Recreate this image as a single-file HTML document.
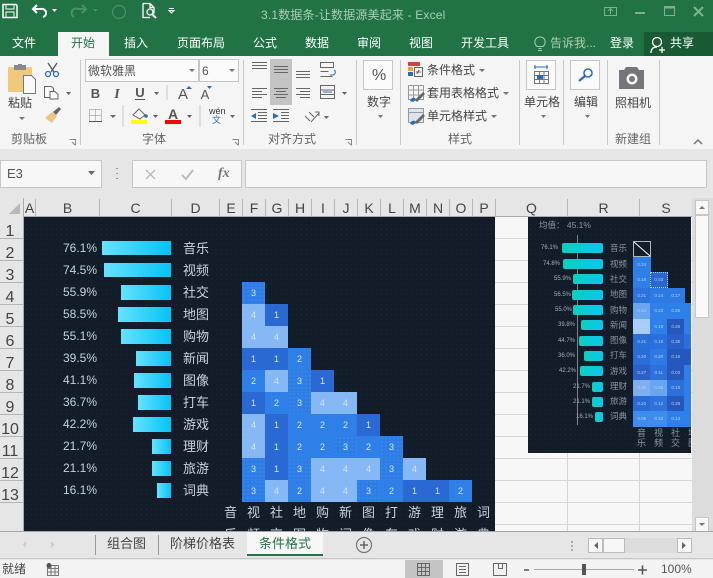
<!DOCTYPE html>
<html lang="zh"><head><meta charset="utf-8"><title>Excel</title>
<style>
*{box-sizing:border-box}
html,body{margin:0;padding:0;width:713px;height:578px;overflow:hidden;background:#e6e6e6;font-family:"Liberation Sans","Noto Sans CJK SC",sans-serif}
#p{position:relative;width:713px;height:578px;overflow:hidden}
.a,.t,.c,.b,.l,.m,.n,.h,.hr,.p,.q,.r,.d,.e{position:absolute}
.t{white-space:nowrap;line-height:1;font-size:12px;color:#444}
.tab{color:#fff;top:37px;font-size:12px}
.g{top:133px;color:#666;font-size:12px}
.h{top:199px;height:18px;text-align:center;font-size:14px;line-height:19px;color:#444;border-right:1px solid #b5b5b5}
.hr{left:0;width:23px;height:22px;text-align:center;font-size:16px;line-height:29px;color:#444;border-bottom:1px solid #b5b5b5;padding-right:3px;overflow:visible}
.c{width:23px;height:22px;color:#d5e4f5;font-size:9px;line-height:22px;text-align:center}
.k1{background:#2a68d4}.k2{background:#2f7fe8}.k3{background-color:#2e7ce6;background-image:radial-gradient(circle,#45a8f2 .5px,transparent .7px);background-size:4px 4px}.k4{background:#86b8f5}
.b{left:0;height:15px;background:linear-gradient(90deg,#66e2ff,#05c3f5)}
.p{width:60px;text-align:right;font-size:12px;line-height:14px;color:#c5d2df;white-space:nowrap}
.l{left:183px;font-size:13px;line-height:14px;color:#c9d4df;white-space:nowrap}
.n{width:23px;text-align:center;font-size:13px;line-height:14px;color:#c9d4df}
.q{width:40px;text-align:right;color:#a5b0bc;font-size:6px;line-height:8px;white-space:nowrap}
.r{height:10px;border-radius:2px;background:linear-gradient(90deg,#0ccfbe,#0bc6ef)}
.m{left:82px;color:#8b96a3;font-size:8.5px;line-height:11px;white-space:nowrap}
.d{width:17.5px;height:15.5px;color:#b9d1ee;font-size:4.5px;line-height:15px;text-align:center}
.e{width:17px;color:#8b96a3;font-size:9px;line-height:10px;text-align:center}
.s{position:absolute;top:60px;width:1px;height:85px;background:#c8c8c8}
</style></head><body><div id="p">

<!-- title bar & tabs -->
<div class="a" style="left:0;top:0;width:713px;height:56px;background:#217346"></div>
<div class="a" style="left:58px;top:32px;width:51px;height:24px;background:#f5f5f5"></div>
<div class="a" style="left:644px;top:32px;width:69px;height:24px;background:#195a35"></div>
<div class="t" style="left:261px;top:9px;color:#a9cdb8;font-size:12px;letter-spacing:.17px">3.1数据条-让数据源美起来 - Excel</div>
<div class="t tab" style="left:12px">文件</div>
<div class="t tab" style="left:71px;color:#217346">开始</div>
<div class="t tab" style="left:124px">插入</div>
<div class="t tab" style="left:177px">页面布局</div>
<div class="t tab" style="left:253px">公式</div>
<div class="t tab" style="left:305px">数据</div>
<div class="t tab" style="left:357px">审阅</div>
<div class="t tab" style="left:409px">视图</div>
<div class="t tab" style="left:461px">开发工具</div>
<div class="t tab" style="left:550px;color:#a9cdb8">告诉我...</div>
<div class="t tab" style="left:610px">登录</div>
<div class="t tab" style="left:670px">共享</div>

<!-- ribbon -->
<div class="a" style="left:0;top:56px;width:713px;height:93px;background:#f5f5f5"></div>
<div class="s" style="left:80px"></div><div class="s" style="left:243px"></div><div class="s" style="left:356px"></div><div class="s" style="left:400px"></div><div class="s" style="left:519px"></div><div class="s" style="left:563px"></div><div class="s" style="left:607px"></div><div class="s" style="left:659px"></div>
<div class="a" style="left:85px;top:59px;width:114px;height:23px;background:#fafafa;border:1px solid #c6c6c6"></div>
<div class="a" style="left:199px;top:59px;width:40px;height:23px;background:#fafafa;border:1px solid #c6c6c6"></div>
<div class="a" style="left:270px;top:59px;width:22px;height:46px;background:#c4c4c4"></div>
<div class="a" style="left:363px;top:60px;width:30px;height:30px;background:#fafafa;border:1px solid #c6c6c6"></div>
<div class="a" style="left:526px;top:60px;width:30px;height:30px;background:#fafafa;border:1px solid #c6c6c6"></div>
<div class="a" style="left:570px;top:60px;width:30px;height:30px;background:#fafafa;border:1px solid #c6c6c6"></div>
<div class="t" style="left:88px;top:65px;font-size:12px;color:#555">微软雅黑</div>
<div class="t" style="left:202px;top:65px;font-size:12px;color:#555">6</div>
<div class="t" style="left:8px;top:97px;color:#444">粘贴</div>
<div class="t g" style="left:11px">剪贴板</div>
<div class="t g" style="left:142px">字体</div>
<div class="t g" style="left:268px">对齐方式</div>
<div class="t g" style="left:448px">样式</div>
<div class="t g" style="left:615px">新建组</div>
<div class="t" style="left:367px;top:96px">数字</div>
<div class="t" style="left:524px;top:96px">单元格</div>
<div class="t" style="left:574px;top:96px">编辑</div>
<div class="t" style="left:615px;top:97px">照相机</div>
<div class="t" style="left:427px;top:64px">条件格式</div>
<div class="t" style="left:427px;top:87px">套用表格格式</div>
<div class="t" style="left:427px;top:110px">单元格样式</div>
<div class="t" style="left:372px;top:68px;font-size:16px;color:#555">%</div>
<div class="t" style="left:209px;top:107px;font-size:9px;color:#333">wén</div>
<div class="t" style="left:212px;top:116px;font-size:9px;color:#2a6cb8">文</div>

<!-- formula bar -->
<div class="a" style="left:0;top:149px;width:713px;height:49px;background:#e6e6e6"></div>
<div class="a" style="left:0;top:160px;width:102px;height:28px;background:#f7f7f7;border:1px solid #c6c6c6"></div>
<div class="a" style="left:132px;top:160px;width:110px;height:28px;background:#f7f7f7;border:1px solid #c6c6c6"></div>
<div class="a" style="left:245px;top:160px;width:462px;height:28px;background:#f7f7f7;border:1px solid #c6c6c6"></div>
<div class="t" style="left:7px;top:167px;font-size:13px;color:#555">E3</div>
<div class="t" style="left:218px;top:166px;font:italic bold 14px 'Liberation Serif',serif;color:#777">fx</div>

<!-- sheet grid -->
<div class="a" style="left:0;top:198px;width:692px;height:333px;background:#f7f7f7"></div>
<div class="a" style="left:495px;top:217px;width:197px;height:314px;background:repeating-linear-gradient(180deg,#f7f7f7 0,#f7f7f7 21px,#d6d6d6 21px,#d6d6d6 22px)"></div>
<div class="a" style="left:567px;top:217px;width:1px;height:314px;background:#d6d6d6"></div>
<div class="a" style="left:639px;top:217px;width:1px;height:314px;background:#d6d6d6"></div>
<div class="a" style="left:0;top:198px;width:692px;height:19px;background:#e6e6e6;border-bottom:1px solid #aaa"></div>
<div class="a" style="left:0;top:198px;width:24px;height:333px;background:#e6e6e6;border-right:1px solid #aaa"></div>

<div class="h" style="left:24px;width:12px">A</div><div class="h" style="left:36px;width:64px">B</div><div class="h" style="left:100px;width:72px">C</div><div class="h" style="left:172px;width:48px">D</div><div class="h" style="left:220px;width:23px">E</div><div class="h" style="left:243px;width:23px">F</div><div class="h" style="left:266px;width:23px">G</div><div class="h" style="left:289px;width:23px">H</div><div class="h" style="left:312px;width:23px">I</div><div class="h" style="left:335px;width:23px">J</div><div class="h" style="left:358px;width:23px">K</div><div class="h" style="left:381px;width:23px">L</div><div class="h" style="left:404px;width:23px">M</div><div class="h" style="left:427px;width:23px">N</div><div class="h" style="left:450px;width:23px">O</div><div class="h" style="left:473px;width:23px">P</div><div class="h" style="left:496px;width:72px">Q</div><div class="h" style="left:568px;width:72px">R</div><div class="h" style="left:640px;width:52px;border:0">S</div>

<div class="hr" style="top:217px">1</div><div class="hr" style="top:239px">2</div><div class="hr" style="top:261px">3</div><div class="hr" style="top:283px">4</div><div class="hr" style="top:305px">5</div><div class="hr" style="top:327px">6</div><div class="hr" style="top:349px">7</div><div class="hr" style="top:371px">8</div><div class="hr" style="top:393px">9</div><div class="hr" style="top:415px">10</div><div class="hr" style="top:437px">11</div><div class="hr" style="top:459px">12</div><div class="hr" style="top:481px">13</div>

<!-- main dark chart -->
<div class="a" style="left:24px;top:217px;width:471px;height:314px;overflow:hidden;background-color:#131c29;background-image:radial-gradient(circle,#1b2835 .6px,transparent .8px);background-size:5px 5px">
  <div class="p" style="left:13px;top:24px">76.1%</div><div class="p" style="left:13px;top:46px">74.5%</div><div class="p" style="left:13px;top:68px">55.9%</div><div class="p" style="left:13px;top:90px">58.5%</div><div class="p" style="left:13px;top:112px">55.1%</div><div class="p" style="left:13px;top:134px">39.5%</div><div class="p" style="left:13px;top:156px">41.1%</div><div class="p" style="left:13px;top:178px">36.7%</div><div class="p" style="left:13px;top:200px">42.2%</div><div class="p" style="left:13px;top:222px">21.7%</div><div class="p" style="left:13px;top:244px">21.1%</div><div class="p" style="left:13px;top:266px">16.1%</div>

  <div class="b" style="left:78px;width:69px;top:24px;height:14px"></div><div class="b" style="left:80px;width:67px;top:46px;height:14px"></div><div class="b" style="left:97px;width:50px;top:68px"></div><div class="b" style="left:94px;width:53px;top:90px"></div><div class="b" style="left:97px;width:50px;top:112px"></div><div class="b" style="left:112px;width:35px;top:134px"></div><div class="b" style="left:110px;width:37px;top:156px"></div><div class="b" style="left:114px;width:33px;top:178px"></div><div class="b" style="left:109px;width:38px;top:200px"></div><div class="b" style="left:128px;width:19px;top:222px"></div><div class="b" style="left:128px;width:19px;top:244px"></div><div class="b" style="left:133px;width:14px;top:266px"></div>

  <div class="l" style="left:159px;top:25px">音乐</div><div class="l" style="left:159px;top:47px">视频</div><div class="l" style="left:159px;top:69px">社交</div><div class="l" style="left:159px;top:91px">地图</div><div class="l" style="left:159px;top:113px">购物</div><div class="l" style="left:159px;top:135px">新闻</div><div class="l" style="left:159px;top:157px">图像</div><div class="l" style="left:159px;top:179px">打车</div><div class="l" style="left:159px;top:201px">游戏</div><div class="l" style="left:159px;top:223px">理财</div><div class="l" style="left:159px;top:245px">旅游</div><div class="l" style="left:159px;top:267px">词典</div>

  <div class="c k3" style="left:218px;top:65px">3</div>
  <div class="c k4" style="left:218px;top:87px">4</div><div class="c k1" style="left:241px;top:87px">1</div>
  <div class="c k4" style="left:218px;top:109px">4</div><div class="c k4" style="left:241px;top:109px">4</div>
  <div class="c k1" style="left:218px;top:131px">1</div><div class="c k1" style="left:241px;top:131px">1</div><div class="c k2" style="left:264px;top:131px">2</div>
  <div class="c k2" style="left:218px;top:153px">2</div><div class="c k4" style="left:241px;top:153px">4</div><div class="c k3" style="left:264px;top:153px">3</div><div class="c k1" style="left:287px;top:153px">1</div>
  <div class="c k1" style="left:218px;top:175px">1</div><div class="c k2" style="left:241px;top:175px">2</div><div class="c k3" style="left:264px;top:175px">3</div><div class="c k4" style="left:287px;top:175px">4</div><div class="c k4" style="left:310px;top:175px">4</div>
  <div class="c k4" style="left:218px;top:197px">4</div><div class="c k1" style="left:241px;top:197px">1</div><div class="c k2" style="left:264px;top:197px">2</div><div class="c k2" style="left:287px;top:197px">2</div><div class="c k2" style="left:310px;top:197px">2</div><div class="c k1" style="left:333px;top:197px">1</div>
  <div class="c k4" style="left:218px;top:219px">4</div><div class="c k1" style="left:241px;top:219px">1</div><div class="c k2" style="left:264px;top:219px">2</div><div class="c k2" style="left:287px;top:219px">2</div><div class="c k3" style="left:310px;top:219px">3</div><div class="c k2" style="left:333px;top:219px">2</div><div class="c k3" style="left:356px;top:219px">3</div>
  <div class="c k3" style="left:218px;top:241px">3</div><div class="c k1" style="left:241px;top:241px">1</div><div class="c k3" style="left:264px;top:241px">3</div><div class="c k4" style="left:287px;top:241px">4</div><div class="c k4" style="left:310px;top:241px">4</div><div class="c k4" style="left:333px;top:241px">4</div><div class="c k3" style="left:356px;top:241px">3</div><div class="c k4" style="left:379px;top:241px">4</div>
  <div class="c k3" style="left:218px;top:263px">3</div><div class="c k4" style="left:241px;top:263px">4</div><div class="c k2" style="left:264px;top:263px">2</div><div class="c k4" style="left:287px;top:263px">4</div><div class="c k4" style="left:310px;top:263px">4</div><div class="c k3" style="left:333px;top:263px">3</div><div class="c k2" style="left:356px;top:263px">2</div><div class="c k1" style="left:379px;top:263px">1</div><div class="c k1" style="left:402px;top:263px">1</div><div class="c k2" style="left:425px;top:263px">2</div>

  <div class="n" style="left:195px;top:289px">音</div><div class="n" style="left:218px;top:289px">视</div><div class="n" style="left:241px;top:289px">社</div><div class="n" style="left:264px;top:289px">地</div><div class="n" style="left:287px;top:289px">购</div><div class="n" style="left:310px;top:289px">新</div><div class="n" style="left:333px;top:289px">图</div><div class="n" style="left:356px;top:289px">打</div><div class="n" style="left:379px;top:289px">游</div><div class="n" style="left:402px;top:289px">理</div><div class="n" style="left:425px;top:289px">旅</div><div class="n" style="left:448px;top:289px">词</div>
  <div class="n" style="left:195px;top:311px">乐</div><div class="n" style="left:218px;top:311px">频</div><div class="n" style="left:241px;top:311px">交</div><div class="n" style="left:264px;top:311px">图</div><div class="n" style="left:287px;top:311px">物</div><div class="n" style="left:310px;top:311px">闻</div><div class="n" style="left:333px;top:311px">像</div><div class="n" style="left:356px;top:311px">车</div><div class="n" style="left:379px;top:311px">戏</div><div class="n" style="left:402px;top:311px">财</div><div class="n" style="left:425px;top:311px">游</div><div class="n" style="left:448px;top:311px">典</div>
</div>

<!-- small chart -->
<div class="a" style="left:528px;top:217px;width:163px;height:236px;overflow:hidden;background-color:#131c29;background-image:radial-gradient(circle,#1b2835 .5px,transparent .7px);background-size:5px 5px">
  <div class="t" style="left:11px;top:4px;font-size:8.5px;color:#8b96a3">均值： 45.1%</div>
  <div class="a" style="left:49px;top:18px;width:1px;height:190px;background:#7b8590"></div>
  <div class="r" style="left:34px;width:41px;top:26px"></div><div class="r" style="left:35px;width:40px;top:42px"></div><div class="r" style="left:45px;width:30px;top:57px"></div><div class="r" style="left:44px;width:31px;top:73px"></div><div class="r" style="left:45px;width:30px;top:88px"></div><div class="r" style="left:53px;width:22px;top:103px"></div><div class="r" style="left:51px;width:24px;top:119px"></div><div class="r" style="left:56px;width:19px;top:134px"></div><div class="r" style="left:52px;width:23px;top:149px"></div><div class="r" style="left:64px;width:11px;top:165px"></div><div class="r" style="left:64px;width:11px;top:180px"></div><div class="r" style="left:67px;width:8px;top:195px"></div>
  <div class="q" style="left:-10px;top:27px">76.1%</div><div class="q" style="left:-8px;top:43px">74.8%</div><div class="q" style="left:3px;top:58px">55.9%</div><div class="q" style="left:3px;top:74px">56.5%</div><div class="q" style="left:4px;top:89px">55.0%</div><div class="q" style="left:7px;top:104px">39.8%</div><div class="q" style="left:7px;top:120px">44.7%</div><div class="q" style="left:7px;top:135px">36.0%</div><div class="q" style="left:8px;top:150px">42.2%</div><div class="q" style="left:22px;top:166px">21.7%</div><div class="q" style="left:22px;top:181px">21.1%</div><div class="q" style="left:25px;top:196px">16.1%</div>
  <div class="m" style="top:26px">音乐</div><div class="m" style="top:42px">视频</div><div class="m" style="top:57px">社交</div><div class="m" style="top:72px">地图</div><div class="m" style="top:88px">购物</div><div class="m" style="top:103px">新闻</div><div class="m" style="top:118px">图像</div><div class="m" style="top:133px">打车</div><div class="m" style="top:149px">游戏</div><div class="m" style="top:164px">理财</div><div class="m" style="top:179px">旅游</div><div class="m" style="top:194px">词典</div>
  <svg class="a" style="left:105px;top:24px" width="18" height="16"><rect x=".5" y=".5" width="17" height="15" fill="none" stroke="#aeb8c2"/><path d="M1 1 17 15" stroke="#fff"/></svg>

  <div class="d" style="left:105px;top:40px;background:#2f7fe8">0.24</div>
  <div class="d" style="left:105px;top:55px;background:#2f7fe8">0.16</div>
  <div class="d" style="left:105px;top:71px;background:#2d72dd">0.21</div>
  <div class="d" style="left:105px;top:86px;background:#6aa5f0">0.41</div>
  <div class="d" style="left:105px;top:102px;background:#a8cdf8">0.31</div>
  <div class="d" style="left:105px;top:117px;background:#2a6ed8">0.21</div>
  <div class="d" style="left:105px;top:132px;background:#2a6cd8">0.20</div>
  <div class="d" style="left:105px;top:148px;background:#2a60c8">0.27</div>
  <div class="d" style="left:105px;top:163px;background:#7eb0f0">0.39</div>
  <div class="d" style="left:105px;top:179px;background:#2a6ad8">0.22</div>
  <div class="d" style="left:105px;top:194px;background:#3f8cef">0.06</div>

  <div class="d" style="left:122px;top:55px;background:#2a66d0;outline:1px dotted #a8cdf8;outline-offset:-1px">0.03</div>
  <div class="d" style="left:122px;top:71px;background:#2e7ae4">0.14</div>
  <div class="d" style="left:122px;top:86px;background:#2f7fe8">0.23</div>
  <div class="d" style="left:122px;top:102px;background:#2f7fe8">0.18</div>
  <div class="d" style="left:122px;top:117px;background:#2a70dc">0.19</div>
  <div class="d" style="left:122px;top:132px;background:#2e7ae4">0.20</div>
  <div class="d" style="left:122px;top:148px;background:#2c70dc">0.11</div>
  <div class="d" style="left:122px;top:163px;background:#6aa5f0">0.06</div>
  <div class="d" style="left:122px;top:179px;background:#2d72dd">0.12</div>
  <div class="d" style="left:122px;top:194px;background:#3f8cef">0.10</div>

  <div class="d" style="left:139px;top:71px;background:#2e7ae4">0.17</div>
  <div class="d" style="left:139px;top:86px;background:#2f7fe8">0.25</div>
  <div class="d" style="left:139px;top:102px;background:#2558bd">0.26</div>
  <div class="d" style="left:139px;top:117px;background:#2a5fc8">0.35</div>
  <div class="d" style="left:139px;top:132px;background:#2558bd">0.16</div>
  <div class="d" style="left:139px;top:148px;background:#2558bd">0.03</div>
  <div class="d" style="left:139px;top:163px;background:#2c70dc">0.18</div>
  <div class="d" style="left:139px;top:179px;background:#2558bd">0.28</div>
  <div class="d" style="left:139px;top:194px;background:#2f7fe8">0.13</div>

  <div class="a" style="left:156px;top:86px;width:7px;height:31px;background:#2f7fe8"></div>
  <div class="a" style="left:156px;top:117px;width:7px;height:15px;background:#2a70dc"></div>
  <div class="a" style="left:156px;top:132px;width:7px;height:16px;background:#2558bd"></div>
  <div class="a" style="left:156px;top:148px;width:7px;height:62px;background:#2f7fe8"></div>

  <div class="e" style="left:105px;top:211px">音<br>乐</div><div class="e" style="left:122px;top:211px">视<br>频</div><div class="e" style="left:139px;top:211px">社<br>交</div><div class="e" style="left:156px;top:211px">地<br>图</div>
</div>

<!-- scrollbars -->
<div class="a" style="left:692px;top:198px;width:21px;height:333px;background:#dcdcdc"></div>
<div class="a" style="left:695px;top:200px;width:14px;height:15px;background:#f7f7f7;border:1px solid #c6c6c6"></div>
<div class="a" style="left:695px;top:215px;width:14px;height:103px;background:#f9f9f9;border:1px solid #c6c6c6"></div>
<div class="a" style="left:695px;top:517px;width:14px;height:15px;background:#f7f7f7;border:1px solid #c6c6c6"></div>
<div class="a" style="left:0;top:531px;width:713px;height:1px;background:#a5a5a5"></div>

<!-- sheet tabs -->
<div class="a" style="left:0;top:532px;width:713px;height:27px;background:#e6e6e6;border-bottom:1px solid #c6c6c6"></div>
<div class="a" style="left:95px;top:535px;width:1px;height:20px;background:#999"></div>
<div class="a" style="left:158px;top:535px;width:1px;height:20px;background:#999"></div>
<div class="a" style="left:247px;top:532px;width:76px;height:24px;background:#f7f7f7;border-bottom:2px solid #217346"></div>
<div class="t" style="left:107px;top:537px;font-size:13px;color:#444">组合图</div>
<div class="t" style="left:170px;top:537px;font-size:13px;color:#444">阶梯价格表</div>
<div class="t" style="left:259px;top:537px;font-size:13px;color:#217346">条件格式</div>
<div class="a" style="left:588px;top:538px;width:104px;height:15px;background:#dcdcdc"></div>
<div class="a" style="left:588px;top:538px;width:15px;height:15px;background:#f7f7f7;border:1px solid #bbb"></div>
<div class="a" style="left:603px;top:538px;width:22px;height:15px;background:#f7f7f7;border:1px solid #bbb"></div>
<div class="a" style="left:677px;top:538px;width:15px;height:15px;background:#f7f7f7;border:1px solid #bbb"></div>

<!-- status bar -->
<div class="a" style="left:0;top:560px;width:713px;height:18px;background:#f3f3f3"></div>
<div class="a" style="left:405px;top:560px;width:38px;height:18px;background:#c4c4c4"></div>
<div class="t" style="left:2px;top:563px;font-size:12px;color:#444">就绪</div>
<div class="t" style="left:661px;top:563px;font-size:12px;color:#555">100%</div>

<!-- icons overlay -->
<svg class="a" style="left:0;top:0" width="713" height="578" viewBox="0 0 713 578" fill="none">
 <!-- QAT -->
 <path d="M3 4.500h13l1 1v12H3z" stroke="#fff" stroke-width="1.500"/><path d="M6 5v4h8V5M6 17v-5h8v5" stroke="#fff"/>
 <path d="M37 5l-4 4 4 4M33 9h8a4 4 0 0 1 2 8" stroke="#fff" stroke-width="2"/>
 <path d="M52 9l5 0-2.500 3z" fill="#fff"/>
 <path d="M82 5l4 4-4 4M86 9h-8a4 4 0 0 0 -4 8" stroke="#4d9068" stroke-width="2"/>
 <path d="M93 9l5 0-2.500 3z" fill="#4d9068"/>
 <circle cx="119" cy="12" r="6.500" stroke="#4d9068" stroke-width="1.200"/>
 <path d="M143 3.500h7l4 4v6M143 3.500v14h7M150 3.500v4h4" stroke="#fff" stroke-width="1.300"/><circle cx="150" cy="12" r="3" stroke="#fff" stroke-width="1.300"/><path d="M152 14l4 4" stroke="#fff" stroke-width="2"/>
 <path d="M169 8.500h5M169 10.500h5l-2.500 2.500z" stroke="#fff"/>
 <!-- window -->
 <path d="M604.500 7.500h12v8h-12z" stroke="#7fb096"/><path d="M608 11l2.500-2.500L613 11M610.500 9v5" stroke="#7fb096"/>
 <path d="M635 13h10" stroke="#7fb096" stroke-width="2"/>
 <path d="M664.500 6.500h10v9h-10z" stroke="#7fb096"/><path d="M664 7.500h11" stroke="#7fb096" stroke-width="2"/>
 <path d="M694 7l9 9M703 7l-9 9" stroke="#7fb096" stroke-width="2"/>
 <path d="M538 50.500h4M538.500 48.500h3M537 46.500c-4-4-2-9.500 3-9.500s7 5.500 3 9.500z" stroke="#a9cdb8"/>
 <circle cx="657" cy="42" r="4.500" stroke="#fff" stroke-width="1.300"/><path d="M651 53c0-4 2-6 6-6M659 50h6M662 47v6" stroke="#fff" stroke-width="1.300"/>
 <!-- clipboard -->
 <rect x="8" y="67" width="24" height="25" rx="1" fill="#f0c97e"/><rect x="14" y="65" width="12" height="5" fill="#8a8a8a"/><rect x="18" y="64" width="4" height="3" fill="#8a8a8a"/>
 <path d="M23.500 75.500h8l4 4v14h-12z" fill="#fafafa" stroke="#777"/>
 <path d="M19 117h6l-3 3z" fill="#777"/>
 <path d="M48 63l6 9M57 63l-6 9" stroke="#555" stroke-width="1.300"/><circle cx="48" cy="74" r="2.500" stroke="#2a6cb8" stroke-width="1.300"/><circle cx="56" cy="74" r="2.500" stroke="#2a6cb8" stroke-width="1.300"/>
 <path d="M44.500 86.500h7l2 2v9h-9z" fill="#fafafa" stroke="#666"/><path d="M50 91.500h5l3 3v4.500h-8z" fill="#fafafa" stroke="#666"/><path d="M66 92h5l-2.500 3z" fill="#666"/>
 <path d="M45 118l7-6 5 4-5 7z" fill="#e8c788"/><path d="M53 112l6-5 2 2-5 6z" fill="#666"/>
 <path d="M189 69h6l-3 3zM229 69h6l-3 3z" fill="#777"/>
 <!-- font -->
 <text x="95.500" y="98" style="font:bold 13px 'Liberation Sans',sans-serif" fill="#555" text-anchor="middle">B</text>
 <text x="117" y="98" style="font:italic bold 14px 'Liberation Serif',serif" fill="#555" text-anchor="middle">I</text>
 <text x="140" y="97" style="font:bold 13px 'Liberation Sans',sans-serif" fill="#555" text-anchor="middle">U</text>
 <path d="M135 99.500h10" stroke="#555"/><path d="M154 92h5l-2.500 3z" fill="#666"/>
 <path d="M167 85v15" stroke="#c8c8c8"/>
 <text x="183" y="99" style="font:15px 'Liberation Sans',sans-serif" fill="#555" text-anchor="middle">A</text><path d="M186 89l3-3 3 3z" fill="#2a6cb8"/>
 <text x="205" y="99" style="font:13px 'Liberation Sans',sans-serif" fill="#555" text-anchor="middle">A</text><path d="M207 86h5l-2.500 3z" fill="#2a6cb8"/>
 <path d="M89.500 109.500h12v12h-12zM95.500 109.500v12M89.500 115.500h12" stroke="#888" stroke-dasharray="1 1"/><path d="M89 121.500h13" stroke="#555"/>
 <path d="M110 115h6l-3 3z" fill="#666"/><path d="M123 105v22" stroke="#c8c8c8"/>
 <path d="M133 115l6-6 6 6-5 4z" stroke="#666" fill="#fafafa"/><circle cx="146" cy="116" r="1.800" fill="#2a6cb8"/>
 <rect x="131" y="120" width="16" height="4" fill="#ff0"/><path d="M153 115h5l-2.500 3z" fill="#666"/>
 <text x="173" y="119" style="font:bold 14px 'Liberation Sans',sans-serif" fill="#555" text-anchor="middle">A</text>
 <rect x="165" y="120" width="16" height="4" fill="#f00"/><path d="M187 115h5l-2.500 3z" fill="#666"/>
 <path d="M200 105v22" stroke="#c8c8c8"/><path d="M230 115h5l-2.500 3z" fill="#666"/>
 <!-- align -->
 <g stroke="#666"><path d="M252 62.500h15M252 65.500h15M252 68.500h15M274 66.500h14M274 69.500h14M274 72.500h14M296 71.500h14M296 74.500h14M296 77.500h14"/>
 <path d="M252 88.500h15M252 91.500h10M252 94.500h15M252 97.500h10M274 88.500h14M276 91.500h10M274 94.500h14M276 97.500h10M296 88.500h14M300 91.500h10M296 94.500h14M300 97.500h10"/>
 <path d="M258 112.500h9M258 115.500h9M258 118.500h9M251 109.500h16M251 121.500h16M281 112.500h8M281 115.500h8M281 118.500h8M273 109.500h16M273 121.500h16"/></g>
 <path d="M251 116l5-3v6zM273 113l6 3-6 3z" fill="#2a6cb8"/>
 <path d="M320.500 62.500h13v5h-13zM320.500 71.500h8M320.500 76.500h12" stroke="#666"/><path d="M334 70c2 1 2 5-2 5h-2" stroke="#2a6cb8"/>
 <path d="M320.500 85.500h14v13h-14zM320.500 90h14M320.500 94.500h14" stroke="#666"/><path d="M323 92h9" stroke="#2a6cb8"/><path d="M342 92h5l-2.500 3z" fill="#666"/>
 <path d="M305 116l5 5M309 112l5 5M311 122l8-9M315 112h4v4" stroke="#666"/><path d="M324 116h5l-2.500 3z" fill="#666"/>
 <path d="M378 115h5l-2.500 3z" fill="#777"/>
 <!-- styles icons -->
 <rect x="408" y="62" width="6" height="4" fill="#d0453a"/><rect x="414" y="62" width="6" height="4" fill="#d0453a"/><rect x="408" y="67" width="5" height="4" fill="#e8a33a"/><rect x="408" y="72" width="5" height="4" fill="#2a6cb8"/>
 <path d="M414.500 67.500h8v9h-8zM416 72h5M419 70l-2 4" stroke="#666"/>
 <path d="M408.500 85.500h15v14h-15zM408.500 90h15M408.500 95h15M413.500 85.500v14M418.500 85.500v14" stroke="#999"/>
 <path d="M415 100l8-8 2 2-8 8z" fill="#666"/><path d="M410 101c1-3 3-4 5-3l1 2-3 2z" fill="#2a6cb8"/>
 <path d="M408.500 108.500h15v14h-15z" stroke="#999" fill="#dde6ef"/><path d="M408.500 112.500h15" stroke="#999"/>
 <path d="M415 122l8-8 2 2-8 8z" fill="#666"/><path d="M410 124c1-3 3-4 5-3l1 2-3 2z" fill="#2a6cb8"/>
 <path d="M479 69h6l-3 3zM503 92h6l-3 3zM491 115h6l-3 3z" fill="#777"/>
 <!-- cells icon -->
 <path d="M534 67h14M535 65v4M547 65v4" stroke="#2a6cb8"/><path d="M534.500 71.500h14v12h-14zM534.500 75.500h14M534.500 79.500h14M539.500 71.500v12M544 71.500v12" stroke="#777"/><rect x="537" y="75" width="6" height="4" fill="#2a6cb8"/>
 <path d="M541 115h5l-2.500 3zM585 115h5l-2.500 3z" fill="#777"/>
 <circle cx="588" cy="73" r="4" stroke="#2a6cb8" stroke-width="1.600"/><path d="M585 76l-6 5" stroke="#2a6cb8" stroke-width="2.200"/>
 <!-- camera -->
 <path d="M619 70h5l2-3h11l2 3h5v19h-25z" fill="#76767a"/><circle cx="632" cy="79" r="5.500" fill="#f5f5f5"/><circle cx="632" cy="79" r="3" fill="#76767a"/>
 <path d="M694 144l4-4 4 4" stroke="#777" stroke-width="1.500"/>
 <!-- launchers -->
 <path d="M69.500 139.500h6v6M72 142l3 3M232.500 139.500h6v6M235 142l3 3M345.500 139.500h6v6M348 142l3 3" stroke="#888"/>
 <!-- formula -->
 <path d="M88 171h7l-3.500 4z" fill="#666"/>
 <path d="M117 168v1M117 173v1M117 178v1" stroke="#999" stroke-width="2"/>
 <path d="M146 170l9 9M155 170l-9 9" stroke="#bbb" stroke-width="1.500"/>
 <path d="M182 175l4 4 7-9" stroke="#bbb" stroke-width="2"/>
 <path d="M9 214h11v-11z" fill="#b8b8b8"/>
 <!-- scroll arrows -->
 <path d="M699 209l3-3 3 3z" fill="#777"/><path d="M699 523h6l-3 3z" fill="#777"/>
 <path d="M26 541l-3.500 3.500 3.500 3.500zM51 541l3.500 3.500-3.500 3.500z" fill="#ccc"/>
 <path d="M598 542l-4 3.500 4 3.500zM682 542l4 3.500-4 3.500z" fill="#666"/>
 <path d="M572 541v2M572 545v2M572 549v2" stroke="#aaa" stroke-width="2"/>
 <circle cx="364" cy="545" r="7.500" stroke="#777" stroke-width="1.200"/><path d="M360 545h8M364 541v8" stroke="#666" stroke-width="1.500"/>
 <!-- status icons -->
 <path d="M47.500 565.500h11v10h-11zM47.500 568.500h11M47.500 572h11M51 565.500v10M55 565.500v10" stroke="#777"/><circle cx="49" cy="565.500" r="2.500" fill="#555"/>
 <path d="M417.500 563.500h12v12h-12zM417.500 567.500h12M417.500 571.500h12M421.500 563.500v12M425.500 563.500v12" stroke="#666"/>
 <path d="M456.500 563.500h12v12h-12z" stroke="#666"/><path d="M459 566.500h7M459 569.500h7M459 572.500h7" stroke="#666"/>
 <path d="M493.500 563.500h13v12h-13zM498.500 563.500v5h4v-5" stroke="#666"/>
 <path d="M524 570h5M638 570h9M642.500 565.500v9" stroke="#555" stroke-width="1.600"/>
 <path d="M534 569.500h100" stroke="#aaa"/><rect x="582" y="564" width="4" height="11" fill="#555"/>
</svg>
</div></body></html>
